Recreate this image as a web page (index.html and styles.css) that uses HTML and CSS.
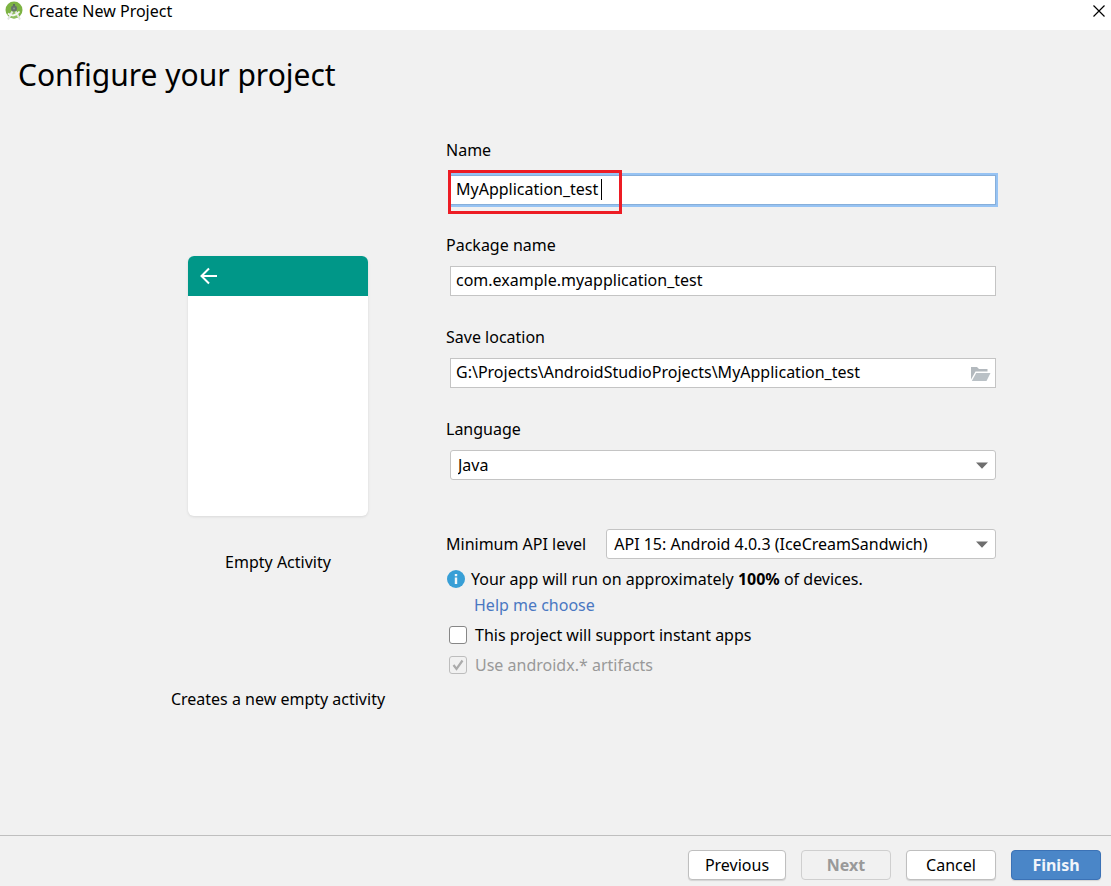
FILE: index.html
```html
<!DOCTYPE html>
<html lang="en">
<head>
<meta charset="utf-8">
<title>Create New Project</title>
<link rel="stylesheet" href="styles.css">
</head>
<body>
<div class="window">
  <header class="titlebar">
    <svg class="app-icon" width="18" height="20" viewBox="0 0 18 20" aria-hidden="true">
      <circle cx="9" cy="9" r="8.5" fill="#7db343"/>
      <path d="M3.500 15.500 7.600 8h2.800l4.100 7.500A8.500 8.500 0 0 1 3.500 15.500Z" fill="#8fbf60"/>
      <path d="M9 3v3" stroke="#5c6b5c" stroke-width="2"/>
      <circle cx="9" cy="7.500" r="3" fill="#66756a"/>
      <circle cx="9" cy="7.500" r="1" fill="#8fa08a"/>
      <path d="M7.300 10.500 3 18.500M10.700 10.500l4.300 8" stroke="#e1e5df" stroke-width="2" fill="none"/>
      <path d="M3 12.500c3.500 2.800 8 2.500 11.500-2" stroke="#f4f7f1" stroke-width="1.800" fill="none"/>
    </svg>
    <span class="titlebar-text">Create New Project</span>
    <button class="close" type="button" aria-label="Close">
      <svg width="12" height="12" viewBox="0 0 12 12"><path d="M.5.5l11 11M11.500.5l-11 11" stroke="#000" stroke-width="1.200"/></svg>
    </button>
  </header>

  <main class="content">
    <h1 class="heading">Configure your project</h1>
    <div class="columns">
      <section class="template">
        <div class="phone">
          <div class="phone-bar">
            <svg width="18" height="18" viewBox="0 0 18 18" aria-hidden="true"><path d="M17 9H2M9 1.500 1.500 9 9 16.500" fill="none" stroke="#fff" stroke-width="2"/></svg>
          </div>
        </div>
        <p class="template-name">Empty Activity</p>
        <p class="template-text">Creates a new empty activity</p>
      </section>

      <form class="form">
        <div class="field field-active">
          <label for="name">Name</label>
          <div class="control">
            <input class="input input-active" id="name" type="text" value="MyApplication_test">
            <span class="highlight"><span class="caret"></span></span>
          </div>
        </div>
        <div class="field">
          <label for="package">Package name</label>
          <div class="control"><input class="input" id="package" type="text" value="com.example.myapplication_test"></div>
        </div>
        <div class="field">
          <label for="location">Save location</label>
          <div class="control">
            <input class="input" id="location" type="text" value="G:\Projects\AndroidStudioProjects\MyApplication_test">
            <button class="browse" type="button" aria-label="Browse">
              <svg width="20" height="16" viewBox="0 0 20 16"><path d="M0 13.500V1h6l2 2h8.500v2.500H4.500Z" fill="#b3b9be"/><path d="M5.200 7H19.500l-4 8H.8Z" fill="#bac1c6"/></svg>
            </button>
          </div>
        </div>
        <div class="field">
          <label for="language">Language</label>
          <div class="control">
            <select class="input select" id="language"><option>Java</option><option>Kotlin</option></select>
            <svg class="arrow" width="12" height="7" viewBox="0 0 12 7" aria-hidden="true"><path d="M0 .5h12L6 6.800Z" fill="#6e6e6e"/></svg>
          </div>
        </div>
        <div class="api">
          <label for="api">Minimum API level</label>
          <div class="control">
            <select class="input select" id="api"><option>API 15: Android 4.0.3 (IceCreamSandwich)</option></select>
            <svg class="arrow" width="12" height="7" viewBox="0 0 12 7" aria-hidden="true"><path d="M0 .5h12L6 6.800Z" fill="#6e6e6e"/></svg>
          </div>
        </div>
        <div class="info">
          <svg width="18" height="18" viewBox="0 0 18 18" aria-hidden="true"><circle cx="9" cy="9" r="9" fill="#389fd6"/><path d="M7.800 4h2.400v2.200H7.800ZM7.800 7.500h2.400V14H7.800Z" fill="#f2f7fa"/></svg>
          <span>Your app will run on approximately <strong>100%</strong> of devices.</span>
        </div>
        <a class="help" href="#">Help me choose</a>
        <label class="check">
          <input class="box" type="checkbox">
          <span>This project will support instant apps</span>
        </label>
        <label class="check check-disabled">
          <input class="box" type="checkbox" checked disabled>
          <svg class="tick" width="18" height="18" viewBox="0 0 18 18" aria-hidden="true"><path d="m4.500 9 3 4L13.500 4.500" fill="none" stroke="#ababab" stroke-width="2.200"/></svg>
          <span>Use androidx.* artifacts</span>
        </label>
      </form>
    </div>
  </main>

  <footer class="footer">
    <button class="button button-wide" type="button">Previous</button>
    <button class="button" type="button" disabled>Next</button>
    <button class="button" type="button">Cancel</button>
    <button class="button button-primary" type="button">Finish</button>
  </footer>
</div>
</body>
</html>
```
FILE: styles.css
```css
* { box-sizing: border-box; }

body {
  margin: 0;
  background: #f1f1f1;
  color: #000;
  font: 16px/24px "Noto Sans", sans-serif;
}

input, select, button { font: inherit; color: inherit; }
svg { display: block; }

.window { display: flex; flex-direction: column; min-height: 100vh; }

.titlebar {
  display: flex;
  align-items: center;
  gap: 6px;
  height: 30px;
  padding: 0 6px 8px 5px;
  background: #fff;
}
.titlebar-text { flex: 1; }
.close { padding: 0; border: 0; background: none; }

.content { flex: 1; padding: 22px 115px 20px 18px; }
.heading { margin: 0; font-size: 30px; line-height: 46px; font-weight: 400; }
.columns { display: grid; grid-template-columns: 336px 1fr; padding: 40px 0 0 92px; }

.template { display: flex; flex-direction: column; align-items: center; padding-top: 118px; }
.phone {
  width: 180px;
  height: 260px;
  overflow: hidden;
  border-radius: 6px;
  background: #fff;
  box-shadow: 0 1px 3px rgba(0, 0, 0, .1);
}
.phone-bar { display: flex; align-items: center; height: 40px; padding-left: 12px; background: #009788; }
.template-name { margin: 34px 0 0; }
.template-text { margin: 113px 0 0; }

.form { display: flex; flex-direction: column; }
.field { display: flex; flex-direction: column; gap: 9px; margin-bottom: 29px; }
.field-active { gap: 13px; margin-bottom: 28px; }
.control { position: relative; flex: 1; margin-left: 4px; }

.input {
  display: block;
  width: 100%;
  height: 30px;
  padding: 0 5px 2px;
  border: 1px solid #c4c4c4;
  border-radius: 0;
  background: #fff;
  line-height: 24px;
  outline: 0;
}
.input-active { border-color: #87afda; box-shadow: 0 0 0 2px #97c3f3; }
.select { appearance: none; padding: 0 7px; border-radius: 3px; }
.arrow { position: absolute; top: 12px; right: 8px; pointer-events: none; }

.browse { position: absolute; top: 8px; right: 5px; padding: 0; border: 0; background: none; }

.highlight {
  position: absolute;
  top: -5px;
  left: -2px;
  width: 174px;
  height: 44px;
  border: 3px solid #ed1c24;
  pointer-events: none;
}
.caret { position: absolute; top: 6px; right: 17px; width: 1px; height: 21px; background: #000; }

.api { display: flex; align-items: center; gap: 16px; margin: 20px 0 8px; }

.info { display: flex; align-items: center; gap: 6px; padding-left: 1px; }
.help { align-self: flex-start; margin: 2px 0 6px 28px; color: #4a78c2; text-decoration: none; }

.check { position: relative; display: flex; align-items: center; gap: 8px; margin-bottom: 6px; padding-left: 3px; }
.check-disabled { color: #999; }
.box {
  appearance: none;
  width: 18px;
  height: 18px;
  margin: 0;
  border: 1px solid #878787;
  border-radius: 3px;
  background: #fff;
}
.box:disabled { border-color: #bdbdbd; background: #f1f1f1; }
.tick { position: absolute; left: 3px; }

.footer {
  display: flex;
  justify-content: flex-end;
  gap: 15px;
  padding: 14px 10px 6px;
  border-top: 1px solid #bfbfbf;
}
.button {
  width: 90px;
  height: 30px;
  padding: 0;
  border: 1px solid #bfbfbf;
  border-radius: 4px;
  background: #fff;
  box-shadow: 0 1px 1px rgba(0, 0, 0, .12);
}
.button-wide { width: 98px; }
.button:disabled { border-color: #cfcfcf; background: #f1f1f1; box-shadow: none; color: #999; font-weight: 700; }
.button-primary { border-color: #3b72b6; background: #4a86c8; color: #f1f5fa; font-weight: 700; }
```
